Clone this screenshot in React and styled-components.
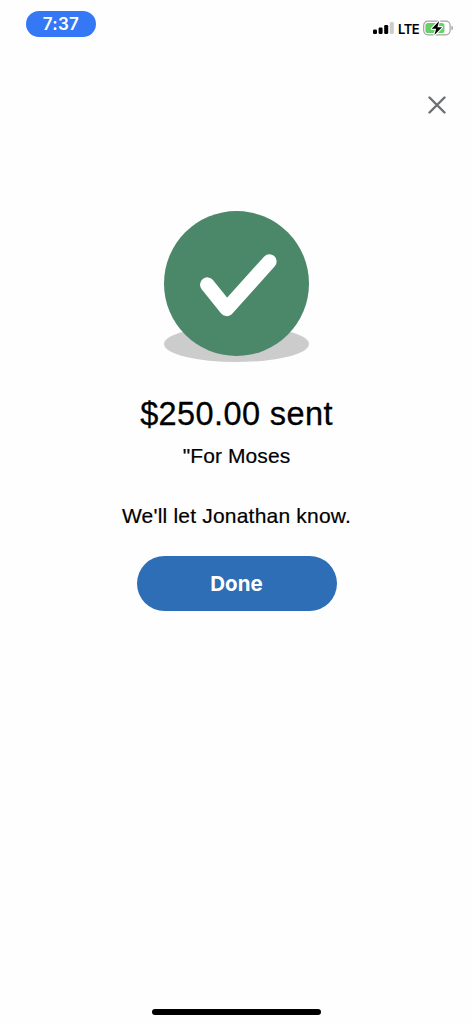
import React from 'react';
import styled, { createGlobalStyle } from 'styled-components';

const GlobalStyle = createGlobalStyle`
  * {
    box-sizing: border-box;
  }

  body {
    margin: 0;
    background-color: #fefefe;
    font-family: Inter, "Liberation Sans", sans-serif;
    color: #000;
  }
`;

const Screen = styled.div`
  display: flex;
  flex-direction: column;
  width: 473px;
  height: 1024px;
  background-color: #fefefe;
  overflow: hidden;
`;

const StatusBar = styled.header`
  display: flex;
  justify-content: space-between;
  align-items: flex-start;
  height: 90px;
  padding: 11px 19px 0 26px;
`;

const TimePill = styled.div`
  display: flex;
  justify-content: center;
  align-items: center;
  width: 70px;
  height: 26px;
  border-radius: 13px;
  background-color: #3478f6;
  color: #fff;
  font-size: 17px;
  font-weight: 600;
  letter-spacing: 0.3px;
`;

const StatusIcons = styled.div`
  display: flex;
  align-items: center;
  height: 20px;
  margin-top: 7px;
`;

const Network = styled.span`
  width: 22px;
  margin: 1px 3px 0 4px;
  font-size: 13px;
  font-weight: 600;
  line-height: 20px;
  letter-spacing: -0.5px;
  white-space: nowrap;
`;

const TopActions = styled.div`
  display: flex;
  justify-content: flex-end;
  padding-right: 21px;
`;

const CloseButton = styled.button`
  display: flex;
  justify-content: center;
  align-items: center;
  width: 30px;
  height: 30px;
  padding: 0;
  border: none;
  background-color: transparent;
  cursor: pointer;
`;

const Content = styled.main`
  display: flex;
  flex-grow: 1;
  flex-direction: column;
  align-items: center;
  padding-top: 91px;
  font-family: "Liberation Sans", Arial, sans-serif;
`;

const Title = styled.h1`
  margin: 31px 0 0;
  font-size: 32.5px;
  font-weight: 400;
  line-height: 42px;
  letter-spacing: 0.4px;
  white-space: nowrap;
  -webkit-text-stroke: 0.3px #000;
`;

const Message = styled.p`
  margin: ${(props) => props.$top} 0 0;
  font-size: 21px;
  line-height: 28px;
  letter-spacing: ${(props) => props.$spacing};
  white-space: nowrap;
  -webkit-text-stroke: 0.2px #000;
`;

const DoneButton = styled.button`
  width: 200px;
  height: 55px;
  margin-top: 26px;
  padding: 0;
  border: none;
  border-radius: 28px;
  background-color: #2e6eb6;
  color: #fff;
  font-family: Inter, sans-serif;
  font-size: 20.5px;
  font-weight: 700;
  cursor: pointer;
`;

const Footer = styled.footer`
  display: flex;
  justify-content: center;
  padding-bottom: 9px;
`;

const HomeIndicator = styled.div`
  width: 169px;
  height: 6px;
  border-radius: 3px;
  background-color: #000;
`;

const SignalIcon = () => (
    <svg width="21" height="12" viewBox="0 0 21 12">
        <rect x="0" y="7.5" width="4" height="4.5" rx="1.2" fill="#000" />
        <rect x="5.6" y="5.5" width="4" height="6.5" rx="1.2" fill="#000" />
        <rect x="11.2" y="3" width="4" height="9" rx="1.2" fill="#000" />
        <rect x="16.8" y="0" width="4" height="12" rx="1.2" fill="#ccc" />
    </svg>
);

const BatteryIcon = () => (
    <svg width="31" height="18" viewBox="0 0 31 18">
        <rect x="0.7" y="2.2" width="26.4" height="13.6" rx="4.2" fill="#fff" stroke="#a3a3a3" strokeWidth="1.2" />
        <rect x="2.4" y="3.9" width="19" height="10.2" rx="2.6" fill="#65d067" />
        <path d="M28.5 6.7c1.9.7 1.9 3.9 0 4.6z" fill="#999" />
        <path
            d="M16.2 2 8.7 9.8h4.5L11.4 16 19 8.2h-4.6z"
            fill="#000"
            stroke="#fff"
            strokeWidth="2.2"
            strokeLinejoin="round"
            paintOrder="stroke"
        />
    </svg>
);

const CloseIcon = () => (
    <svg width="18" height="18" viewBox="0 0 18 18">
        <path d="M1.5 1.5l15 15M16.5 1.5l-15 15" fill="none" stroke="#6b7075" strokeWidth="2.4" strokeLinecap="round" />
    </svg>
);

const SuccessIcon = () => (
    <svg width="145" height="151" viewBox="0 0 145 151">
        <ellipse cx="72.5" cy="133" rx="72.5" ry="18" fill="#cccccc" />
        <circle cx="72.5" cy="72.5" r="72.5" fill="#4b886a" />
        <path
            d="M43.3 73.6L62.8 97.9L105.4 50.5"
            fill="none"
            stroke="#fff"
            strokeWidth="14.5"
            strokeLinecap="round"
            strokeLinejoin="round"
        />
    </svg>
);

const App = () => {
    return (
        <>
            <GlobalStyle />
            <Screen>
                <StatusBar>
                    <TimePill>7:37</TimePill>
                    <StatusIcons>
                        <SignalIcon />
                        <Network>LTE</Network>
                        <BatteryIcon />
                    </StatusIcons>
                </StatusBar>
                <TopActions>
                    <CloseButton aria-label="Close">
                        <CloseIcon />
                    </CloseButton>
                </TopActions>
                <Content>
                    <SuccessIcon />
                    <Title>$250.00 sent</Title>
                    <Message $top="7px" $spacing="0.1px">"For Moses</Message>
                    <Message $top="32px" $spacing="0.2px">We'll let Jonathan know.</Message>
                    <DoneButton>Done</DoneButton>
                </Content>
                <Footer>
                    <HomeIndicator />
                </Footer>
            </Screen>
        </>
    );
};

export default App;
